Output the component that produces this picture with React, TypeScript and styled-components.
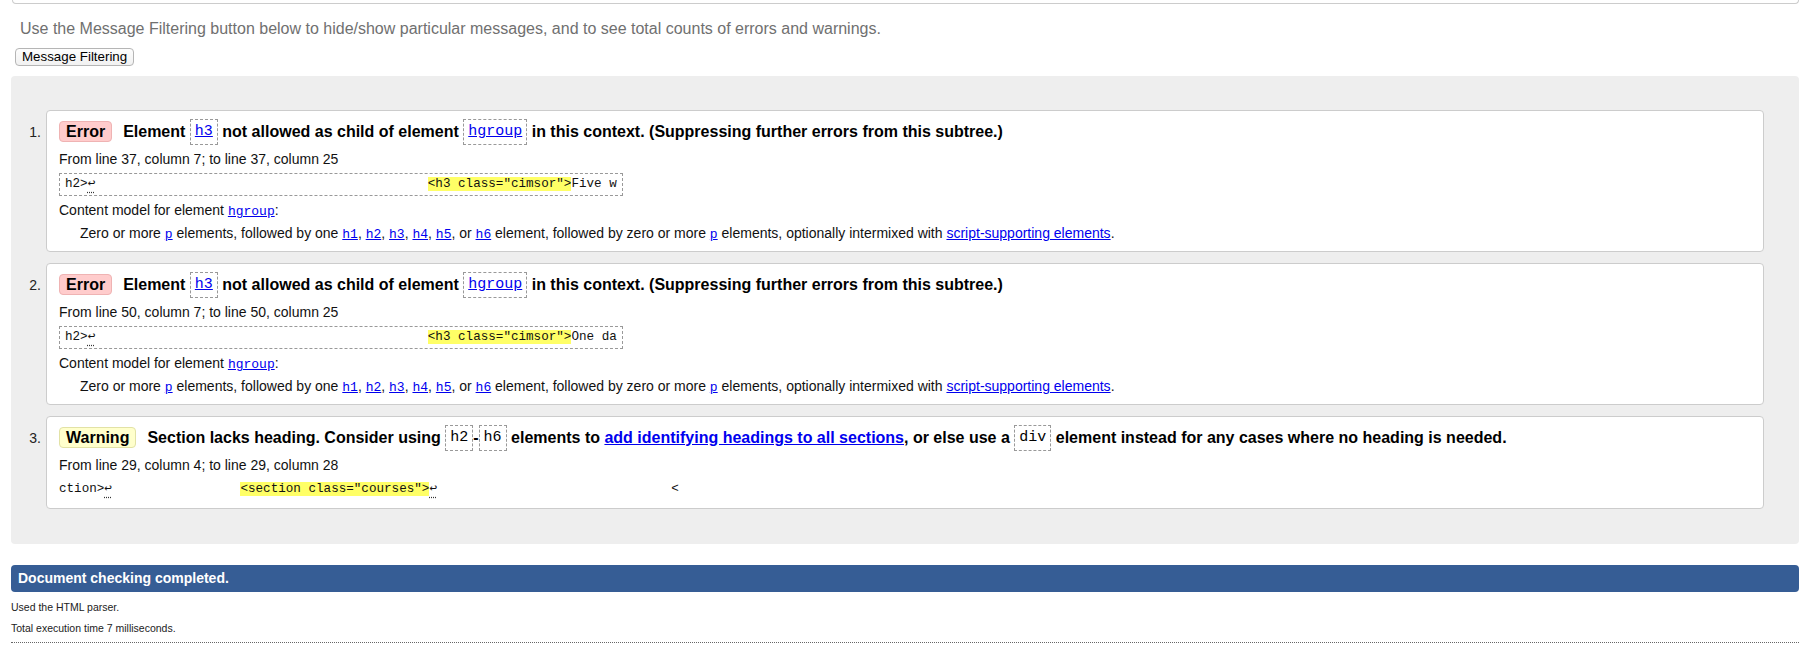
import React from "react";
import styled, { createGlobalStyle } from "styled-components";

const GlobalStyle = createGlobalStyle`
  html, body {
    margin: 0;
    padding: 0;
    background: #fff;
  }
  body {
    font-family: "Liberation Sans", Arial, sans-serif;
    color: #000;
  }
`;

const mono = `"Liberation Mono", "DejaVu Sans Mono", monospace`;

const Page = styled.div`
  margin-left: 11px;
  width: 1788px;
`;

const FormEdge = styled.div`
  margin-left: 1px;
  height: 3px;
  border: 1px solid #ccc;
  border-top: none;
  border-radius: 0 0 4px 4px;
`;

const Instructions = styled.p`
  margin: 15px 0 0 9px;
  font-size: 16px;
  line-height: 20px;
  color: #707070;
`;

const FilterButton = styled.button`
  display: block;
  margin: 9px 0 0 4px;
  padding: 1px 6px;
  font-family: "Liberation Sans", Arial, sans-serif;
  font-size: 13.33px;
  line-height: 14px;
  color: #000;
  background: linear-gradient(#fdfdfd, #f1f1f1);
  border: 1px solid #b5b5b5;
  border-radius: 4px;
`;

const Panel = styled.div`
  margin-top: 10px;
  background: #eee;
  border-radius: 4px;
  padding: 34px 35px 35px 0;
`;

const MessageList = styled.ol`
  list-style: none;
  margin: 0;
  padding: 0;
  display: flex;
  flex-direction: column;
  gap: 11px;
`;

const Item = styled.li`
  display: grid;
  grid-template-columns: 35px 1fr;
  align-items: start;
`;

const Number = styled.span`
  text-align: right;
  padding: 13px 5px 0 0;
  font-size: 14px;
  line-height: 18px;
  color: #222;
`;

const Card = styled.div`
  background: #fff;
  border: 1px solid #ccc;
  border-radius: 4px;
  padding: 8px 12px 9px;
  display: flex;
  flex-direction: column;
  gap: 5px;
`;

const Heading = styled.p`
  margin: 0;
  font-size: 16px;
  font-weight: bold;
  line-height: 26px;
  height: 26px;
  white-space: nowrap;
`;

const Badge = styled.strong<{ $kind: "error" | "warning" }>`
  display: inline-block;
  vertical-align: top;
  margin: 2px 11px 0 0;
  padding: 0 6px;
  line-height: 19px;
  border-radius: 4px;
  background: ${(p) => (p.$kind === "error" ? "#fcc" : "#ffc")};
  border: 1px solid ${(p) => (p.$kind === "error" ? "#efb3b3" : "#e2e2a6")};
`;

const Code = styled.code`
  display: inline-block;
  vertical-align: top;
  box-sizing: border-box;
  height: 26px;
  padding: 0 4px;
  border: 1px dashed #999;
  font-family: ${mono};
  font-size: 15px;
  font-weight: normal;
  line-height: 24px;
`;

const Link = styled.a`
  color: #00e;
  text-decoration: underline;
`;

const MonoLink = styled(Link)`
  font-family: ${mono};
  font-size: 13px;
`;

const Meta = styled.p`
  margin: 0;
  height: 18px;
  font-size: 14px;
  line-height: 18px;
  color: #111;
`;

const Extract = styled.code<{ $framed: boolean }>`
  align-self: flex-start;
  box-sizing: border-box;
  height: ${(p) => (p.$framed ? "23px" : "20px")};
  padding: ${(p) => (p.$framed ? "0 5px" : "0")};
  border: ${(p) => (p.$framed ? "1px dashed #999" : "none")};
  font-family: ${mono};
  font-size: 12.6px;
  line-height: ${(p) => (p.$framed ? "21px" : "20px")};
  white-space: pre;
  overflow: visible;
  color: #111;
`;

const Mark = styled.b`
  font-weight: normal;
  background: #ff6;
`;

const LineBreak = styled.span`
  line-height: 0;
  text-decoration: underline dotted #333;
  text-underline-offset: 5px;
`;

const ModelText = styled(Meta)`
  padding-left: 21px;
`;

const Status = styled.div`
  margin-top: 21px;
  height: 27px;
  line-height: 27px;
  padding: 0 7px;
  background: #365d95;
  border-radius: 4px;
  color: #fff;
  font-size: 14px;
  font-weight: bold;
`;

const Footer = styled.div`
  margin-top: 8px;
  padding-bottom: 7px;
  border-bottom: 1px dotted #666;
  display: flex;
  flex-direction: column;
  gap: 7px;
`;

const FooterLine = styled.p`
  margin: 0;
  font-size: 10.5px;
  line-height: 14px;
  color: #222;
`;

const sp = (n: number) => " ".repeat(n);

const ContentModel = () => (
  <>
    <Meta>
      Content model for element <MonoLink href="#">hgroup</MonoLink>:
    </Meta>
    <ModelText>
      Zero or more <MonoLink href="#">p</MonoLink> elements, followed by one{" "}
      <MonoLink href="#">h1</MonoLink>, <MonoLink href="#">h2</MonoLink>,{" "}
      <MonoLink href="#">h3</MonoLink>, <MonoLink href="#">h4</MonoLink>,{" "}
      <MonoLink href="#">h5</MonoLink>, or <MonoLink href="#">h6</MonoLink>{" "}
      element, followed by zero or more <MonoLink href="#">p</MonoLink>{" "}
      elements, optionally intermixed with{" "}
      <Link href="#">script-supporting elements</Link>.
    </ModelText>
  </>
);

const HgroupError = ({ line, tail }: { line: number; tail: string }) => (
  <Card>
    <Heading>
      <Badge $kind="error">Error</Badge>
      Element{" "}
      <Code>
        <Link href="#">h3</Link>
      </Code>{" "}
      not allowed as child of element{" "}
      <Code>
        <Link href="#">hgroup</Link>
      </Code>{" "}
      in this context. (Suppressing further errors from this subtree.)
    </Heading>
    <Meta>
      From line {line}, column 7; to line {line}, column 25
    </Meta>
    <Extract $framed>
      h2&gt;<LineBreak>↩</LineBreak>
      {sp(44)}
      <Mark>&lt;h3 class="cimsor"&gt;</Mark>
      {tail}
    </Extract>
    <ContentModel />
  </Card>
);

const SectionWarning = () => (
  <Card>
    <Heading>
      <Badge $kind="warning">Warning</Badge>
      Section lacks heading. Consider using <Code>h2</Code>-<Code>h6</Code>{" "}
      elements to <Link href="#">add identifying headings to all sections</Link>
      , or else use a <Code>div</Code> element instead for any cases where no
      heading is needed.
    </Heading>
    <Meta>From line 29, column 4; to line 29, column 28</Meta>
    <Extract $framed={false}>
      ction&gt;<LineBreak>↩</LineBreak>
      {sp(17)}
      <Mark>&lt;section class="courses"&gt;</Mark>
      <LineBreak>↩</LineBreak>
      {sp(31)}&lt;
    </Extract>
  </Card>
);

export default function App() {
  return (
    <>
      <GlobalStyle />
      <Page>
        <FormEdge />
        <Instructions>
          Use the Message Filtering button below to hide/show particular
          messages, and to see total counts of errors and warnings.
        </Instructions>
        <FilterButton type="button">Message Filtering</FilterButton>
        <Panel>
          <MessageList>
            <Item>
              <Number>1.</Number>
              <HgroupError line={37} tail="Five w" />
            </Item>
            <Item>
              <Number>2.</Number>
              <HgroupError line={50} tail="One da" />
            </Item>
            <Item>
              <Number>3.</Number>
              <SectionWarning />
            </Item>
          </MessageList>
        </Panel>
        <Status>Document checking completed.</Status>
        <Footer>
          <FooterLine>Used the HTML parser.</FooterLine>
          <FooterLine>Total execution time 7 milliseconds.</FooterLine>
        </Footer>
      </Page>
    </>
  );
}
